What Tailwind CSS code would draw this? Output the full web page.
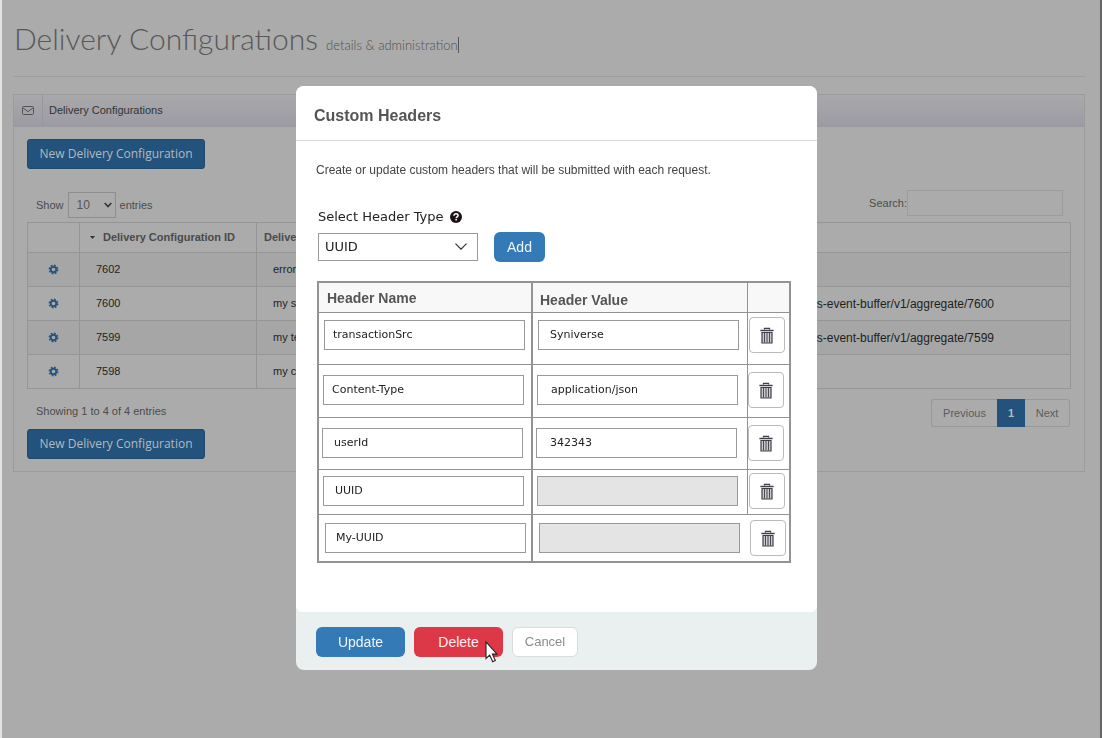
<!DOCTYPE html>
<html lang="en">
<head>
<meta charset="utf-8">
<meta name="viewport" content="width=device-width, initial-scale=1">
<title>Delivery Configurations</title>
<script src="https://cdn.jsdelivr.net/npm/@tailwindcss/browser@4"></script>
</head>
<body class="bg-[#e4e4e4] font-['Liberation_Sans',Arial,sans-serif] text-[11px] text-[#4c4c4c]">
<svg class="hidden" aria-hidden="true">
  <symbol id="trash" viewBox="0 0 14 17">
    <path d="M4.500 2.500V1.300h5v1.200" fill="none" stroke="#3f4047" stroke-width="1.300"/>
    <path d="M.4 3.500h13.200" stroke="#3f4047" stroke-width="1.500"/>
    <path d="M2 5.500h10v10.500H2z" fill="#c9cad0" stroke="#3f4047" stroke-width="1.200"/>
    <path d="M4.500 6v9.500M7 6v9.500M9.500 6v9.500" stroke="#4a4b52" stroke-width="1"/>
  </symbol>
  <symbol id="gear" viewBox="0 0 12 12">
    <circle cx="6" cy="6" r="4.600" fill="none" stroke="#245480" stroke-width="1.600" stroke-dasharray="1.900 1.710"/>
    <circle cx="6" cy="6" r="3" fill="none" stroke="#245480" stroke-width="2"/>
  </symbol>
</svg>

<main class="ml-[2px] min-h-screen border-r-[3px] border-white bg-[#ababab]">
<div class="min-h-screen border-r-2 border-[#666] pl-[11px] pr-[15px] pt-[22px]">
  <header class="flex h-[55px] items-baseline gap-2 border-b border-[#9f9f9f]">
    <h1 class="pl-px font-[Lato,sans-serif] text-[30px] leading-8 font-light text-[#585858]">Delivery Configurations</h1>
    <p class="border-r border-[#555] font-[Lato,sans-serif] text-[13px] leading-4 font-light text-[#505050]">details &amp; administration</p>
  </header>

  <section class="mt-[17px] border border-[#9b9b9b] pb-3">
    <div class="flex h-8 items-center border-b border-[#9a99a0] bg-linear-to-b from-[#a9a9ab] to-[#9c9ba3] text-[#333]">
      <span class="flex h-full w-[29px] items-center justify-center border-r border-[#9695a0]">
        <svg class="h-[9px] w-3" viewBox="0 0 12 9" fill="none" stroke="#555" stroke-width="1"><rect x=".5" y=".5" width="11" height="8" rx="1"/><path d="M.8 1.800 6 5.600l5.200-3.800"/></svg>
      </span>
      <h2 class="pl-[6px]">Delivery Configurations</h2>
    </div>
    <div class="px-[13px] pt-3">
      <button class="block h-[30px] w-[178px] rounded-[3px] border border-[#1f4a70] bg-[#23527c] font-['Open_Sans',sans-serif] text-[12px] text-[#b5b9bd]">New Delivery Configuration</button>
      <div class="mt-[23px] flex items-start justify-between pl-[9px] pr-2">
        <div class="flex items-center">
          <label for="len">Show</label>
          <div class="relative mx-1 h-[26px] w-12">
            <select id="len" class="h-full w-full appearance-none border border-[#8e8e8e] bg-transparent pl-2 text-[12px] text-[#555]"><option>10</option></select>
            <svg class="pointer-events-none absolute top-[10px] right-1 h-[6px] w-2" viewBox="0 0 8 6" fill="none" stroke="#333" stroke-width="1.600"><path d="M.7 1 4 4.500 7.300 1"/></svg>
          </div>
          <span>entries</span>
        </div>
        <div class="-mt-[2px] flex items-center">
          <label for="search">Search:</label>
          <input id="search" type="search" class="h-[26px] w-[156px] border border-[#9c9c9c] bg-transparent px-2">
        </div>
      </div>

      <table class="mt-1 w-full table-fixed border-collapse border border-[#959595] text-left text-[#1e1e1e]">
        <colgroup><col class="w-[52px]"><col class="w-[177px]"><col class="w-[200px]"><col></colgroup>
        <thead>
          <tr class="h-[30px] text-[#4a4a4a]">
            <th class="border border-[#959595]"></th>
            <th class="border border-[#959595] pl-[10px]"><span class="flex items-center gap-2"><svg class="h-[3px] w-[5px]" viewBox="0 0 5 3"><path d="M0 0h5L2.500 3z" fill="#333"/></svg>Delivery Configuration ID</span></th>
            <th class="pl-[7px]">Delive</th>
            <th></th>
          </tr>
        </thead>
        <tbody>
          <tr class="h-[34px] border-y border-[#959595] bg-[#a6a6a6]">
            <td class="border-r border-[#959595]"><svg class="mx-auto size-[11px]"><use href="#gear"/></svg></td><td class="border-r border-[#959595] pl-4">7602</td><td class="pl-4">error</td><td></td>
          </tr>
          <tr class="h-[34px] border-y border-[#959595]">
            <td class="border-r border-[#959595]"><svg class="mx-auto size-[11px]"><use href="#gear"/></svg></td><td class="border-r border-[#959595] pl-4">7600</td><td class="pl-4">my s</td><td class="pr-[76px] text-right text-[12px]">ss-event-buffer/v1/aggregate/7600</td>
          </tr>
          <tr class="h-[34px] border-y border-[#959595] bg-[#a6a6a6]">
            <td class="border-r border-[#959595]"><svg class="mx-auto size-[11px]"><use href="#gear"/></svg></td><td class="border-r border-[#959595] pl-4">7599</td><td class="pl-4">my te</td><td class="pr-[76px] text-right text-[12px]">ss-event-buffer/v1/aggregate/7599</td>
          </tr>
          <tr class="h-[34px] border-y border-[#959595]">
            <td class="border-r border-[#959595]"><svg class="mx-auto size-[11px]"><use href="#gear"/></svg></td><td class="border-r border-[#959595] pl-4">7598</td><td class="pl-4">my c</td><td></td>
          </tr>
        </tbody>
      </table>

      <div class="flex items-start justify-between">
        <div class="pt-[14px]">
          <p class="pl-[9px] leading-4">Showing 1 to 4 of 4 entries</p>
          <button class="mt-[10px] block h-[30px] w-[178px] rounded-[3px] border border-[#1f4a70] bg-[#23527c] font-['Open_Sans',sans-serif] text-[12px] text-[#b5b9bd]">New Delivery Configuration</button>
        </div>
        <nav class="mt-[10px] mr-px flex h-7 text-[#5c5c5c]">
          <a href="#" class="flex w-[66px] items-center justify-center rounded-l-[3px] border border-r-0 border-[#989898]">Previous</a>
          <a href="#" class="flex w-7 items-center justify-center bg-[#23527c] font-bold text-[#b5b9bd]">1</a>
          <a href="#" class="flex w-[45px] items-center justify-center rounded-r-[3px] border border-l-0 border-[#989898]">Next</a>
        </nav>
      </div>
    </div>
  </section>
</div>
</main>

<div class="fixed inset-0 flex items-start justify-center pt-[86px] pl-2">
  <div role="dialog" aria-labelledby="dlg" class="w-[521px] overflow-hidden rounded-lg bg-[#eaeff0]">
    <div class="rounded-b-md bg-white pb-[49px]">
      <h2 id="dlg" class="flex h-[55px] items-center border-b border-[#dcdcdc] pt-[6px] pl-[18px] text-[16px] font-bold text-[#555]">Custom Headers</h2>
      <div class="px-5">
        <p class="pt-5 text-[12px] leading-[18px] text-[#444]">Create or update custom headers that will be submitted with each request.</p>
        <div class="mt-[30px] flex items-center gap-[6px] pl-[2px] font-['DejaVu_Sans',Verdana,sans-serif] text-[13px] leading-4 text-[#222]">
          <label for="type">Select Header Type</label>
          <svg class="size-3" viewBox="0 0 12 12"><circle cx="6" cy="6" r="6" fill="#1a1214"/><path d="M4 4.700C4 3.400 4.900 2.800 6 2.800s2.100.7 2.100 1.700c0 1.400-1.900 1.400-1.900 2.700" fill="none" stroke="#fff" stroke-width="1.500"/><path d="M5.400 8h1.500v1.400H5.400z" fill="#fff"/></svg>
        </div>
        <div class="mt-[7px] flex items-center gap-4 pl-[2px]">
          <div class="relative h-7 w-[160px]">
            <select id="type" class="h-full w-full appearance-none border border-[#999] bg-white pl-[6px] font-['DejaVu_Sans',Verdana,sans-serif] text-[13px] text-[#222]"><option>UUID</option></select>
            <svg class="pointer-events-none absolute top-[10px] right-[11px] h-[7px] w-3" viewBox="0 0 12 7" fill="none" stroke="#333" stroke-width="1.200"><path d="M.5.6 6 6.200 11.500.6"/></svg>
          </div>
          <button class="h-[30px] w-[51px] rounded-md bg-[#337ab7] text-[14px] text-[#eef5fb]">Add</button>
        </div>
      </div>

      <table class="mt-[19px] ml-[21px] w-[474px] table-fixed border-separate border-spacing-0 border-2 border-[#939393] text-left font-['DejaVu_Sans',Verdana,sans-serif] text-[11px] text-[#222]">
        <colgroup><col class="w-[214px]"><col class="w-[215px]"><col></colgroup>
        <thead class="bg-[#f8f8f8] font-['Liberation_Sans',Arial,sans-serif] text-[14px] text-[#555]">
          <tr class="h-[30px]">
            <th class="border-r-2 border-b border-[#939393] pt-[2px] pl-2">Header Name</th>
            <th class="border-r border-b border-[#939393] pt-[6px] pl-[7px]">Header Value</th>
            <th class="border-b border-[#939393]"></th>
          </tr>
        </thead>
        <tbody class="align-top">
          <tr class="h-[52px]">
            <td class="border-r-2 border-b border-[#939393] pt-[7px] pl-[5px]"><input aria-label="Header name 1" value="transactionSrc" class="block h-[30px] w-[201px] border border-[#999] pb-[2px] pl-2"></td>
            <td class="border-r border-b border-[#939393] pt-[7px] pl-[5px]"><input aria-label="Header value 1" value="Syniverse" class="block h-[30px] w-[201px] border border-[#999] pb-[2px] pl-[11px]"></td>
            <td class="border-b border-[#939393] pt-1 pl-px"><button aria-label="Delete header 1" class="flex size-9 items-center justify-center rounded border border-[#bbb] bg-white"><svg class="h-[17px] w-[14px]"><use href="#trash"/></svg></button></td>
          </tr>
          <tr class="h-[53px]">
            <td class="border-r-2 border-b border-[#939393] pt-[10px] pl-1"><input aria-label="Header name 2" value="Content-Type" class="block h-[30px] w-[201px] border border-[#999] pb-px pl-2"></td>
            <td class="border-r border-b border-[#939393] pt-[10px] pl-1"><input aria-label="Header value 2" value="application/json" class="block h-[30px] w-[201px] border border-[#999] pb-px pl-[13px]"></td>
            <td class="border-b border-[#939393] pt-[7px]"><button aria-label="Delete header 2" class="flex size-9 items-center justify-center rounded border border-[#bbb] bg-white"><svg class="h-[17px] w-[14px]"><use href="#trash"/></svg></button></td>
          </tr>
          <tr class="h-[52px]">
            <td class="border-r-2 border-b border-[#939393] pt-[10px] pl-[3px]"><input aria-label="Header name 3" value="userId" class="block h-[30px] w-[201px] border border-[#999] pb-px pl-[11px]"></td>
            <td class="border-r border-b border-[#939393] pt-[10px] pl-[3px]"><input aria-label="Header value 3" value="342343" class="block h-[30px] w-[201px] border border-[#999] pb-px pl-[13px]"></td>
            <td class="border-b border-[#939393] pt-[7px]"><button aria-label="Delete header 3" class="flex size-9 items-center justify-center rounded border border-[#bbb] bg-white"><svg class="h-[17px] w-[14px]"><use href="#trash"/></svg></button></td>
          </tr>
          <tr class="h-[45px]">
            <td class="border-r-2 border-b border-[#939393] pt-[6px] pl-1"><input aria-label="Header name 4" value="UUID" class="block h-[30px] w-[201px] border border-[#999] pb-px pl-[11px]"></td>
            <td class="border-r border-b border-[#939393] pt-[6px] pl-1"><input aria-label="Header value 4" disabled class="block h-[30px] w-[201px] border border-[#999] bg-[#e4e4e4]"></td>
            <td class="border-b border-[#939393] pt-[3px] pl-px"><button aria-label="Delete header 4" class="flex size-9 items-center justify-center rounded border border-[#bbb] bg-white"><svg class="h-[17px] w-[14px]"><use href="#trash"/></svg></button></td>
          </tr>
          <tr class="h-[46px]">
            <td class="border-r-2 border-[#939393] pt-2 pl-[6px]"><input aria-label="Header name 5" value="My-UUID" class="block h-[30px] w-[201px] border border-[#999] pb-px pl-[10px]"></td>
            <td class="pt-2 pl-[6px]"><input aria-label="Header value 5" disabled class="block h-[30px] w-[201px] border border-[#999] bg-[#e4e4e4]"></td>
            <td class="pt-[5px] pl-[2px]"><button aria-label="Delete header 5" class="flex size-9 items-center justify-center rounded border border-[#bbb] bg-white"><svg class="h-[17px] w-[14px]"><use href="#trash"/></svg></button></td>
          </tr>
        </tbody>
      </table>
    </div>
    <div class="flex h-[58px] items-center gap-[9px] pt-[2px] pl-5 text-[14px]">
      <button class="h-[30px] w-[89px] rounded-md bg-[#337ab7] text-[#eef5fb]">Update</button>
      <button class="relative h-[30px] w-[89px] rounded-md bg-[#dc3848] text-[#fdeef0]">Delete
        <svg class="absolute top-[14px] left-[71px] h-[22px] w-[13px]" viewBox="0 0 13 22"><path d="M1 1v16.500l3.700-3.400 3 6.600 2.600-1.200-2.900-6.400H12z" fill="#fff" stroke="#222" stroke-width="1.100"/></svg>
      </button>
      <button class="h-[30px] w-[66px] rounded-md border border-[#d8dcdc] bg-white text-[13px] text-[#8c8c8c]">Cancel</button>
    </div>
  </div>
</div>
</body>
</html>
